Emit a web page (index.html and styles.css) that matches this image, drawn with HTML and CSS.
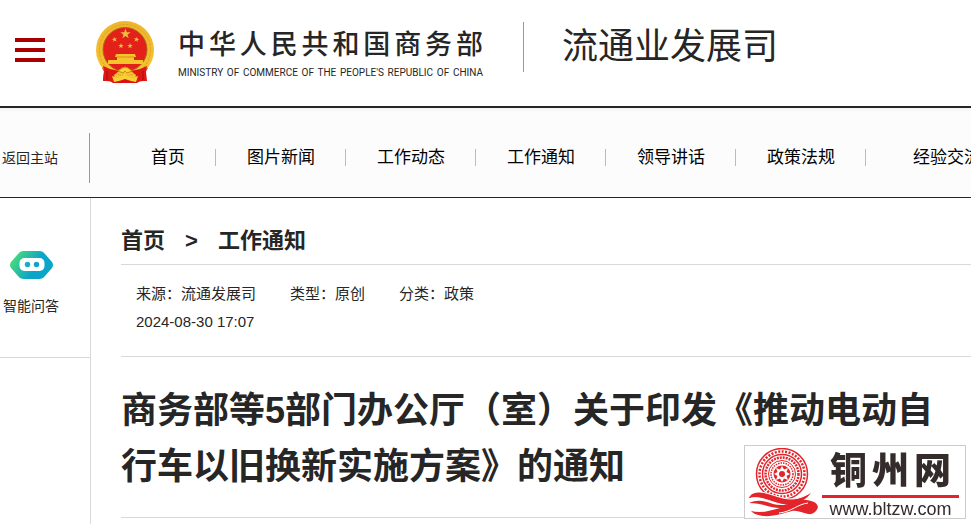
FILE: index.html
```html
<!DOCTYPE html>
<html lang="zh-CN">
<head>
<meta charset="utf-8">
<meta name="viewport" content="width=device-width, initial-scale=1">
<title>流通业发展司</title>
<link rel="stylesheet" href="styles.css">
</head>
<body>
<header class="header">
  <button class="menu-btn" type="button" aria-label="菜单">
    <span></span><span></span><span></span>
  </button>
  <a class="logo" href="#">
    <svg class="emblem" viewBox="0 0 58 62" aria-hidden="true">
      <defs>
        <linearGradient id="gold" x1="0" y1="0" x2="0" y2="1">
          <stop offset="0" stop-color="#efb52c"/>
          <stop offset="1" stop-color="#f5c62f"/>
        </linearGradient>
        <path id="star" d="M0-10 2.3-3.1 9.5-3.1 3.7 1.2 5.9 8.1 0 3.8-5.9 8.1-3.7 1.2-9.5-3.1-2.3-3.1z"/>
      </defs>
      <path d="M9 42 6 47 8 50 7 59 14 60 17 62H41L44 60 50 59 50 50 52 47 49 42z" fill="#d9120f"/>
      <circle cx="29" cy="29" r="29" fill="url(#gold)"/>
      <circle cx="29" cy="29" r="25.500" fill="none" stroke="#e0a524" stroke-width="1" stroke-dasharray="3 1"/>
      <circle cx="29" cy="28.500" r="22" fill="#e4201b" stroke="#b5651a" stroke-width="1"/>
      <g fill="#e9bf3f">
        <use href="#star" transform="translate(29.500 13) scale(.54)"/>
        <use href="#star" transform="translate(18.500 18.500) rotate(-12) scale(.29)"/>
        <use href="#star" transform="translate(40.500 18.500) rotate(12) scale(.29)"/>
        <use href="#star" transform="translate(25 25) scale(.29)"/>
        <use href="#star" transform="translate(34 25) scale(.29)"/>
      </g>
      <path d="M20 33h19l1 3h-2v3h9v4H12v-4h9v-3h-2z" fill="#f4c62c"/>
      <path d="M21 36h17" stroke="#d98a1b"/>
      <path d="M7 45 14 48 23 50 18 54 20 61 10 60 7 60 8 51zM51 45 44 48 35 50 40 54 38 61 48 60 51 60 50 51z" fill="#dd1713"/>
      <path d="M22 50 26 47 29 46 32 47 36 50 31 52 29 50 27 52z" fill="#f9d53a" stroke="#cf8a17"/>
      <path d="M16 55 23 57 29 53 35 57 42 55 40 61 35 60 29 58 23 60 18 61z" fill="#f7d135"/>
      <path d="M11 50v9M47 50v9" stroke="#a90d0a"/>
    </svg>
    <span class="ministry">
      <span class="ministry-cn">中华人民共和国商务部</span>
      <span class="ministry-en">MINISTRY OF COMMERCE OF THE PEOPLE'S REPUBLIC OF CHINA</span>
    </span>
  </a>
  <div class="department">流通业发展司</div>
</header>

<nav class="nav">
  <a class="nav-back" href="#">返回主站</a>
  <ul class="nav-list">
    <li><a href="#">首页</a></li>
    <li><a href="#">图片新闻</a></li>
    <li><a href="#">工作动态</a></li>
    <li><a href="#">工作通知</a></li>
    <li><a href="#">领导讲话</a></li>
    <li><a href="#">政策法规</a></li>
    <li><a href="#">经验交流</a></li>
  </ul>
</nav>

<div class="page">
  <aside class="sidebar">
    <a class="bot" href="#">
      <svg class="bot-icon" viewBox="0 0 43 28" aria-hidden="true">
        <defs>
          <linearGradient id="bot" x1="0" y1="0" x2="1" y2=".4">
            <stop offset="0" stop-color="#4ddc7c"/>
            <stop offset=".2" stop-color="#43d482"/>
            <stop offset=".7" stop-color="#0aa5c9"/>
            <stop offset="1" stop-color="#0aa5c9"/>
          </linearGradient>
        </defs>
        <path d="M13 0H30Q33 0 35 3L42 11Q44 14 42 17L35 25Q33 28 30 28H13Q10 28 8 25L1 17Q-1 14 1 11L8 3Q10 0 13 0z" fill="url(#bot)"/>
        <rect x="9.500" y="7" width="25" height="13" rx="5" fill="#fff"/>
        <circle cx="17.500" cy="13.500" r="2.700" fill="#16aec2"/>
        <circle cx="26.500" cy="13.500" r="2.700" fill="#0aa5c9"/>
      </svg>
      智能问答
    </a>
  </aside>

  <main class="content">
    <div class="crumbs">
      <a href="#">首页</a>
      <span>&gt;</span>
      <a href="#">工作通知</a>
    </div>
    <div class="meta">
      <div class="meta-row">
        <span>来源：流通发展司</span>
        <span>类型：原创</span>
        <span>分类：政策</span>
      </div>
      <time datetime="2024-08-30T17:07">2024-08-30 17:07</time>
    </div>
    <h1 class="title">商务部等5部门办公厅（室）关于印发《推动电动自行车以旧换新实施方案》的通知</h1>
  </main>
</div>

<div class="watermark">
  <svg class="watermark-icon" viewBox="0 0 72 70" aria-hidden="true">
    <g fill="none" stroke="#e3242b">
      <circle cx="34" cy="26" r="25.500" stroke-width="1.500"/>
      <circle cx="34" cy="26" r="22.500" stroke-width="2.500" stroke-dasharray="2 1.500"/>
      <circle cx="34" cy="26" r="19.500" stroke-width="1.500"/>
      <circle cx="34" cy="26" r="16.500" stroke-width="2.500" stroke-dasharray="2 1"/>
      <circle cx="34" cy="26" r="13.500" stroke-width="1"/>
      <circle cx="34" cy="26" r="11" stroke-width="1.500" stroke-dasharray="1.500 1"/>
    </g>
    <circle cx="34" cy="26" r="8.500" fill="#e3242b"/>
    <path d="M34 18 36 21.500 40 20 38.500 24 42 26 38.500 28 40 32 36 30.500 34 34 32 30.500 28 32 29.500 28 26 26 29.500 24 28 20 32 21.500z" fill="#fff"/>
    <circle cx="34" cy="26" r="3" fill="#e3242b"/>
    <path d="M0 51C2 45 7 44 12 44C23 45 32 51 43 51C51 51 57 48 64 44C59 52 50 57 38 57C25 56 12 46 0 51z" fill="#e3242b" stroke="#fff"/>
    <path d="M1 55C10 51 17 53 25 56C38 60 47 52 56 52C63 52 69 54 70 59C69 63 65 67 60 66C54 65 50 62 44 63C36 65 25 69 15 68C8 67 5 65 3 63C14 66 24 62 32 60C22 60 14 55 1 55z" fill="#e3242b"/>
    <path d="M31 65C43 64 50 56 60 55" fill="none" stroke="#fff"/>
  </svg>
  <div class="watermark-text">
    <span class="watermark-name">铜州网</span>
    <span class="watermark-url">www.bltzw.com</span>
  </div>
</div>
</body>
</html>
```
FILE: styles.css
```css
* {
  box-sizing: border-box;
}

body {
  margin: 0;
  background: #fff;
  color: #262626;
  font-family: "Liberation Sans", "Noto Sans CJK SC", sans-serif;
  font-size: 15px;
  overflow-x: hidden;
}

a {
  color: inherit;
  text-decoration: none;
}

/* Header */
.header {
  display: flex;
  align-items: flex-start;
  height: 108px;
  padding: 20px 15px 0;
  border-bottom: 2px solid #262626;
}

.menu-btn {
  display: flex;
  flex-direction: column;
  gap: 6px;
  width: 30px;
  margin: 18px 51px 0 0;
  padding: 0;
  border: 0;
  background: none;
  cursor: pointer;
}

.menu-btn span {
  height: 4px;
  width: 100%;
  background: #a80000;
}

.logo {
  display: flex;
  gap: 24px;
}

.emblem {
  width: 58px;
  height: 62px;
  margin-top: 1px;
}

.ministry {
  display: flex;
  flex-direction: column;
  min-width: 305px;
  padding-top: 5px;
  text-align-last: justify;
}

.ministry-cn {
  font-size: 27px;
  font-weight: 500;
  line-height: 40px;
}

.ministry-en {
  font-family: Roboto, sans-serif;
  font-size: 10px;
  line-height: 16px;
  white-space: nowrap;
}

.department {
  margin: 2px 0 0 40px;
  padding-left: 38px;
  border-left: 1px solid #999;
  font-size: 36px;
  font-weight: 400;
  line-height: 50px;
  white-space: nowrap;
}

/* Navigation */
.nav {
  display: flex;
  align-items: center;
  height: 90px;
  padding-top: 10px;
  border-bottom: 1px solid #262626;
  background: linear-gradient(#f4f4f4, #fcfcfc 4px);
  overflow: hidden;
}

.nav-back {
  flex: none;
  width: 90px;
  padding-left: 2px;
  border-right: 1px solid #999;
  font-size: 14px;
  line-height: 50px;
}

.nav-list {
  display: flex;
  margin: 0;
  padding: 0 0 0 31px;
  list-style: none;
}

.nav-list li {
  flex: none;
  padding: 0 30px 0 31px;
  border-right: 1px solid #bbb;
  color: #000;
  font-size: 17px;
  line-height: 17px;
  white-space: nowrap;
}

.nav-list li:first-child {
  padding: 0 30px;
}

.nav-list li:last-child {
  padding: 0 47px;
}

/* Page body */
.page {
  display: flex;
}

.sidebar {
  flex: none;
  width: 91px;
  min-height: calc(100vh - 198px);
  border-right: 1px solid #d9d9d9;
}

.bot {
  display: flex;
  flex-direction: column;
  align-items: center;
  gap: 17px;
  height: 160px;
  padding: 53px 28px 0 0;
  border-bottom: 1px solid #d9d9d9;
  font-size: 14px;
  line-height: 20px;
  white-space: nowrap;
}

.bot-icon {
  width: 43px;
  height: 28px;
}

.content {
  flex: 1;
  padding-left: 30px;
}

.crumbs {
  display: flex;
  gap: 20px;
  padding: 26px 0 7px;
  border-bottom: 1px solid #d9d9d9;
  font-size: 22px;
  font-weight: bold;
  line-height: 33px;
}

.meta {
  padding: 15px 15px 20px;
  border-bottom: 1px solid #d9d9d9;
  line-height: 28px;
}

.meta-row {
  display: flex;
  gap: 34px;
}

.title {
  margin: 0 25px 0 0;
  padding: 26px 0 22px;
  border-bottom: 1px solid #d9d9d9;
  font-size: 36px;
  line-height: 56px;
}

/* Site stamp over the page corner */
.watermark {
  position: fixed;
  right: 5px;
  bottom: 5px;
  display: flex;
  gap: 2px;
  width: 222px;
  height: 74px;
  padding: 2px 6px 0 3px;
  border: 1px solid #ccc;
  background: #fff;
}

.watermark-icon {
  flex: none;
  width: 72px;
  height: 70px;
}

.watermark-text {
  flex: 1;
  display: flex;
  flex-direction: column;
  color: #332c2b;
}

.watermark-name {
  padding: 0 8px;
  border-bottom: 3px solid #e3242b;
  font-size: 37px;
  font-weight: 900;
  line-height: 47px;
  text-align-last: justify;
}

.watermark-url {
  font-size: 18px;
  line-height: 22px;
  text-align: center;
}
```
